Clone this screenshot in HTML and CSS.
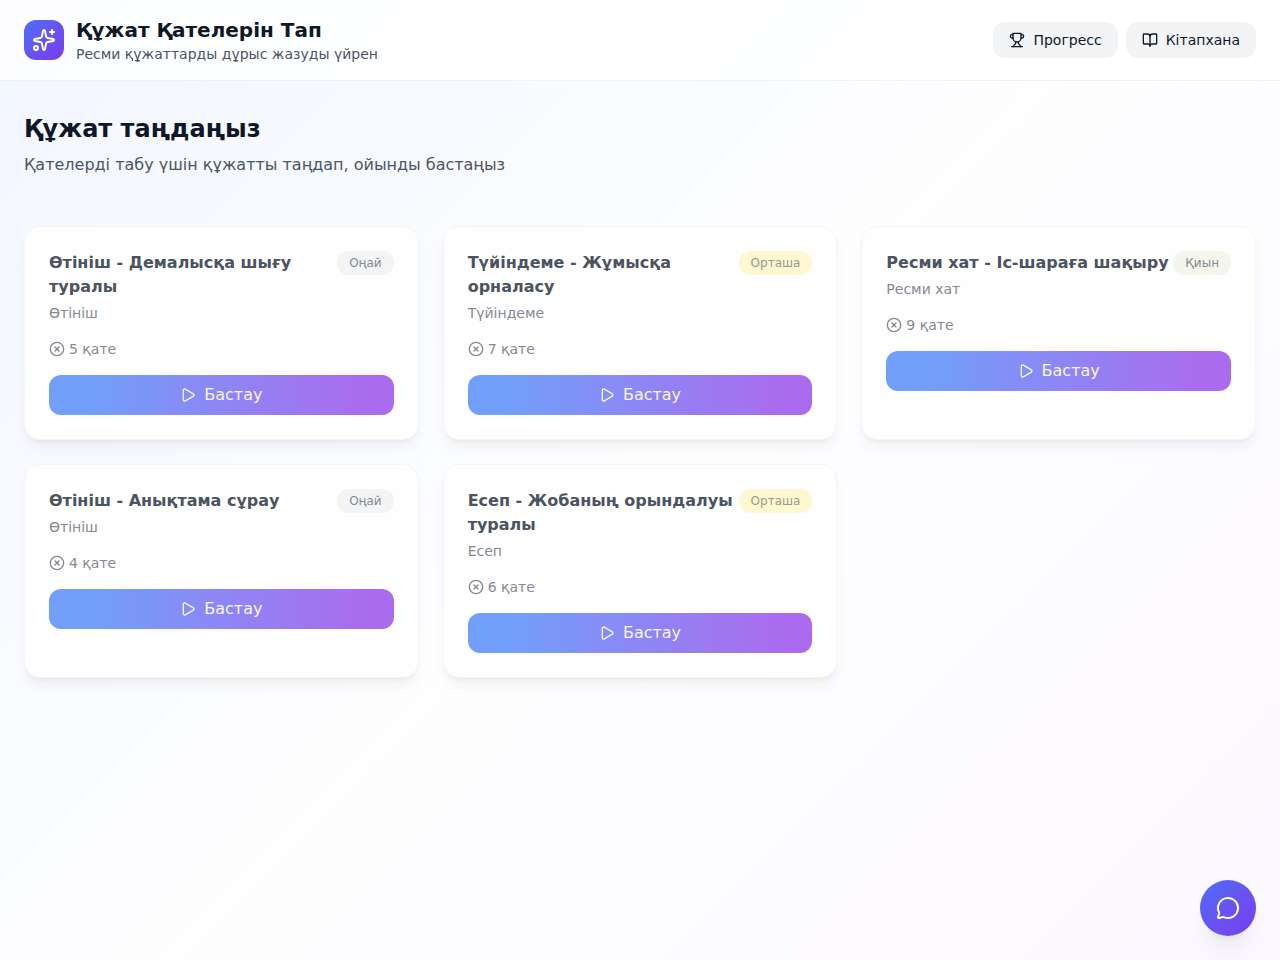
FILE: index.html
```html
<!DOCTYPE html>
<html lang="kk">
<head>
    <meta charset="UTF-8">
    <meta name="viewport" content="width=device-width, initial-scale=1.0">
    <title>Құжат Қателерін Тап</title>
    <link rel="stylesheet" href="styles.css">
</head>
<body>

    <!-- icons used more than once -->
    <svg class="sprite" aria-hidden="true">
        <symbol id="icon-error" viewBox="0 0 24 24">
            <circle cx="12" cy="12" r="10"/>
            <path d="m15 9-6 6"/>
            <path d="m9 9 6 6"/>
        </symbol>
        <symbol id="icon-play" viewBox="0 0 24 24">
            <path d="M5 5a2 2 0 0 1 3.008-1.728l11.997 6.998a2 2 0 0 1 .003 3.458l-12 7A2 2 0 0 1 5 19z"/>
        </symbol>
    </svg>

    <header class="header">
        <div class="brand">
            <div class="logo">
                <svg class="icon icon-lg" viewBox="0 0 24 24">
                    <path d="M11.017 2.814a1 1 0 0 1 1.966 0l1.051 5.558a2 2 0 0 0 1.594 1.594l5.558 1.051a1 1 0 0 1 0 1.966l-5.558 1.051a2 2 0 0 0-1.594 1.594l-1.051 5.558a1 1 0 0 1-1.966 0l-1.051-5.558a2 2 0 0 0-1.594-1.594l-5.558-1.051a1 1 0 0 1 0-1.966l5.558-1.051a2 2 0 0 0 1.594-1.594z"/>
                    <path d="M20 2v4"/>
                    <path d="M22 4h-4"/>
                    <circle cx="4" cy="20" r="2"/>
                </svg>
            </div>
            <div>
                <h1>Құжат Қателерін Тап</h1>
                <p>Ресми құжаттарды дұрыс жазуды үйрен</p>
            </div>
        </div>
        <nav class="nav">
            <button type="button" class="nav-btn">
                <svg class="icon" viewBox="0 0 24 24">
                    <path d="M6 9H4.5a2.5 2.5 0 0 1 0-5H6"/>
                    <path d="M18 9h1.5a2.5 2.5 0 0 0 0-5H18"/>
                    <path d="M4 22h16"/>
                    <path d="M10 14.66V17c0 .55-.47.98-.97 1.21C7.85 18.75 7 20.24 7 22"/>
                    <path d="M14 14.66V17c0 .55.47.98.97 1.21C16.15 18.75 17 20.24 17 22"/>
                    <path d="M18 2H6v7a6 6 0 0 0 12 0V2Z"/>
                </svg>
                Прогресс
            </button>
            <button type="button" class="nav-btn">
                <svg class="icon" viewBox="0 0 24 24">
                    <path d="M12 7v14"/>
                    <path d="M3 18a1 1 0 0 1-1-1V4a1 1 0 0 1 1-1h5a4 4 0 0 1 4 4 4 4 0 0 1 4-4h5a1 1 0 0 1 1 1v13a1 1 0 0 1-1 1h-6a3 3 0 0 0-3 3 3 3 0 0 0-3-3z"/>
                </svg>
                Кітапхана
            </button>
        </nav>
    </header>

    <main class="main">
        <div class="intro">
            <h2>Құжат таңдаңыз</h2>
            <p>Қателерді табу үшін құжатты таңдап, ойынды бастаңыз</p>
        </div>

        <div class="cards">
            <article class="card">
                <div class="card-head">
                    <div>
                        <h3>Өтініш - Демалысқа шығу туралы</h3>
                        <p>Өтініш</p>
                    </div>
                    <span class="badge">Оңай</span>
                </div>
                <div class="errors"><svg class="icon"><use href="#icon-error"/></svg>5 қате</div>
                <button type="button" class="start"><svg class="icon"><use href="#icon-play"/></svg>Бастау</button>
            </article>

            <article class="card">
                <div class="card-head">
                    <div>
                        <h3>Түйіндеме - Жұмысқа орналасу</h3>
                        <p>Түйіндеме</p>
                    </div>
                    <span class="badge medium">Орташа</span>
                </div>
                <div class="errors"><svg class="icon"><use href="#icon-error"/></svg>7 қате</div>
                <button type="button" class="start"><svg class="icon"><use href="#icon-play"/></svg>Бастау</button>
            </article>

            <article class="card">
                <div class="card-head">
                    <div>
                        <h3>Ресми хат - Іс-шараға шақыру</h3>
                        <p>Ресми хат</p>
                    </div>
                    <span class="badge hard">Қиын</span>
                </div>
                <div class="errors"><svg class="icon"><use href="#icon-error"/></svg>9 қате</div>
                <button type="button" class="start"><svg class="icon"><use href="#icon-play"/></svg>Бастау</button>
            </article>

            <article class="card">
                <div class="card-head">
                    <div>
                        <h3>Өтініш - Анықтама сұрау</h3>
                        <p>Өтініш</p>
                    </div>
                    <span class="badge">Оңай</span>
                </div>
                <div class="errors"><svg class="icon"><use href="#icon-error"/></svg>4 қате</div>
                <button type="button" class="start"><svg class="icon"><use href="#icon-play"/></svg>Бастау</button>
            </article>

            <article class="card">
                <div class="card-head">
                    <div>
                        <h3>Есеп - Жобаның орындалуы туралы</h3>
                        <p>Есеп</p>
                    </div>
                    <span class="badge medium">Орташа</span>
                </div>
                <div class="errors"><svg class="icon"><use href="#icon-error"/></svg>6 қате</div>
                <button type="button" class="start"><svg class="icon"><use href="#icon-play"/></svg>Бастау</button>
            </article>
        </div>
    </main>

    <button type="button" class="chat" aria-label="Чат">
        <svg class="icon icon-lg" viewBox="0 0 24 24">
            <path d="M2.992 16.342a2 2 0 0 1 .094 1.167l-1.065 3.29a1 1 0 0 0 1.236 1.168l3.413-.998a2 2 0 0 1 1.099.092 10 10 0 1 0-4.777-4.719"/>
        </svg>
    </button>

</body>
</html>
```
FILE: styles.css
```css
* {
    box-sizing: border-box;
}

body {
    margin: 0;
    min-height: 100vh;
    font-family: "DejaVu Sans", sans-serif;
    font-size: 16px;
    line-height: 24px;
    color: #101828;
    background: linear-gradient(135deg, #f2f6ff, #fefeff 50%, #fbf8ff);
}

h1, h2, h3, p {
    margin: 0;
}

button {
    font-family: inherit;
    border: 0;
    cursor: pointer;
}

.sprite {
    display: none;
}

.icon {
    width: 16px;
    height: 16px;
    flex-shrink: 0;
    fill: none;
    stroke: currentColor;
    stroke-width: 2;
    stroke-linecap: round;
    stroke-linejoin: round;
}

.icon-lg {
    width: 24px;
    height: 24px;
}

/* Header */
.header {
    display: flex;
    align-items: center;
    justify-content: space-between;
    gap: 16px;
    padding: 16px 24px;
    background: rgba(255, 255, 255, 0.8);
    border-bottom: 1px solid #f0f1f4;
}

.brand {
    display: flex;
    align-items: center;
    gap: 12px;
}

.logo {
    display: flex;
    align-items: center;
    justify-content: center;
    width: 40px;
    height: 40px;
    border-radius: 12px;
    color: #fff;
    background: linear-gradient(135deg, #4f6ef7, #7c3aed);
}

.header h1 {
    font-size: 20px;
    line-height: 28px;
}

.header p {
    font-size: 14px;
    line-height: 20px;
    color: #4a5565;
}

.nav {
    display: flex;
    gap: 8px;
}

.nav-btn {
    display: flex;
    align-items: center;
    gap: 8px;
    padding: 8px 16px;
    border-radius: 12px;
    font-size: 14px;
    line-height: 20px;
    color: #101828;
    background: #f3f4f6;
}

/* Document list */
.main {
    padding: 32px 24px;
}

.intro {
    margin-bottom: 49px;
}

.intro h2 {
    margin-bottom: 8px;
    font-size: 24px;
    line-height: 32px;
}

.intro p {
    color: #4a5565;
}

.cards {
    display: grid;
    grid-template-columns: repeat(3, 1fr);
    gap: 24px;
}

.card {
    padding: 24px;
    border: 1px solid #f4f5f8;
    border-radius: 16px;
    background: #fefefe;
    box-shadow: 0 10px 15px -3px rgba(0, 0, 0, 0.05), 0 4px 6px -4px rgba(0, 0, 0, 0.08);
}

.card-head {
    display: flex;
    align-items: flex-start;
    justify-content: space-between;
    margin-bottom: 16px;
}

.card h3 {
    margin-bottom: 4px;
    font-size: 16px;
    line-height: 24px;
    color: #4c5361;
}

.card p, .errors {
    font-size: 14px;
    line-height: 20px;
    color: #858a92;
}

.badge {
    padding: 4px 12px;
    border-radius: 12px;
    font-size: 12px;
    line-height: 16px;
    color: #858a92;
    background: #f3f4f6;
}

.badge.medium {
    color: #9a9a8c;
    background: #fef7d0;
}

.badge.hard {
    background: #f5f5ec;
}

.errors {
    display: flex;
    align-items: center;
    gap: 4px;
    margin-bottom: 16px;
}

.start {
    display: flex;
    align-items: center;
    justify-content: center;
    gap: 8px;
    width: 100%;
    padding: 8px 16px;
    border-radius: 12px;
    font-size: 16px;
    line-height: 24px;
    color: #f8f6ff;
    background: linear-gradient(90deg, #729ffa 12%, #ab6bee 92%);
}

/* Chat button */
.chat {
    position: fixed;
    right: 24px;
    bottom: 24px;
    display: flex;
    align-items: center;
    justify-content: center;
    width: 56px;
    height: 56px;
    padding: 0;
    border-radius: 50%;
    color: #fff;
    background: linear-gradient(135deg, #4f6ef7, #7c3aed);
    box-shadow: 0 20px 25px -5px rgba(0, 0, 0, 0.06), 0 8px 10px -6px rgba(0, 0, 0, 0.08);
}

@media (max-width: 1023px) {
    .cards {
        grid-template-columns: repeat(2, 1fr);
    }
}

@media (max-width: 700px) {
    .header {
        flex-wrap: wrap;
    }

    .cards {
        grid-template-columns: 1fr;
    }
}
```
